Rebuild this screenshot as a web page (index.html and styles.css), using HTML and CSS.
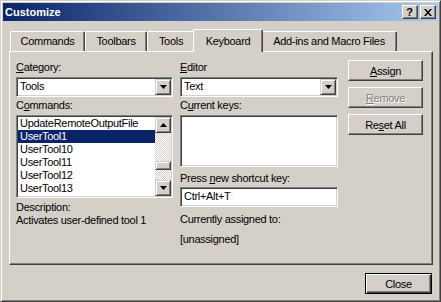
FILE: index.html
```html
<!DOCTYPE html>
<html lang="en">
<head>
    <meta charset="UTF-8">
    <title>Customize</title>
    <link rel="stylesheet" href="styles.css">
</head>
<body>
    <div class="window">
        <div class="titlebar">
            <span class="title">Customize</span>
            <span class="caption-btn help">?</span>
            <span class="caption-btn">
                <svg width="8" height="7" viewBox="0 0 8 7"><path d="M0 0h2l2 2.5L6 0h2L5 3.5 8 7H6L4 4.5 2 7H0l3-3.5z" fill="#000"/></svg>
            </span>
        </div>
        <div class="client">
            <div class="tabs">
                <div class="tab tab-commands">Commands</div>
                <div class="tab tab-toolbars">Toolbars</div>
                <div class="tab tab-tools">Tools</div>
                <div class="tab tab-keyboard selected">Keyboard</div>
                <div class="tab tab-addins">Add-ins and Macro Files</div>
            </div>
            <div class="panel">
                <div class="col col-left">
                    <div class="label"><u>C</u>ategory:</div>
                    <div class="combo">
                        <span class="field-text">Tools</span>
                        <span class="drop-btn"><svg width="7" height="4" viewBox="0 0 7 4"><path d="M0 0h7L3.5 4z" fill="#000"/></svg></span>
                    </div>
                    <div class="label after-field">C<u>o</u>mmands:</div>
                    <div class="listbox">
                        <ul class="items">
                            <li>UpdateRemoteOutputFile</li>
                            <li class="active">UserTool1</li>
                            <li>UserTool10</li>
                            <li>UserTool11</li>
                            <li>UserTool12</li>
                            <li>UserTool13</li>
                        </ul>
                        <div class="scrollbar">
                            <span class="scroll-btn"><svg width="7" height="4" viewBox="0 0 7 4"><path d="M0 4h7L3.5 0z" fill="#000"/></svg></span>
                            <div class="track"><span class="thumb"></span></div>
                            <span class="scroll-btn"><svg width="7" height="4" viewBox="0 0 7 4"><path d="M0 0h7L3.5 4z" fill="#000"/></svg></span>
                        </div>
                    </div>
                    <div class="label desc-label">Description:</div>
                    <div class="label">Activates user-defined tool 1</div>
                </div>
                <div class="col col-mid">
                    <div class="label"><u>E</u>ditor</div>
                    <div class="combo">
                        <span class="field-text">Text</span>
                        <span class="drop-btn"><svg width="7" height="4" viewBox="0 0 7 4"><path d="M0 0h7L3.5 4z" fill="#000"/></svg></span>
                    </div>
                    <div class="label after-field">C<u>u</u>rrent keys:</div>
                    <div class="keys-box"></div>
                    <div class="label press-label">Press <u>n</u>ew shortcut key:</div>
                    <div class="input"><span class="field-text">Ctrl+Alt+T</span></div>
                    <div class="label assigned-label">Currently assigned to:</div>
                    <div class="label unassigned">[unassigned]</div>
                </div>
                <div class="col col-right">
                    <button class="btn" type="button"><u>A</u>ssign</button>
                    <button class="btn disabled" type="button"><u>R</u>emove</button>
                    <button class="btn" type="button">Re<u>s</u>et All</button>
                </div>
            </div>
            <div class="footer">
                <button class="btn btn-default" type="button">Close</button>
            </div>
        </div>
    </div>
</body>
</html>
```

FILE: styles.css
```css
* {
    box-sizing: border-box;
}
body {
    margin: 0;
    background: #d4d0c8;
    font-family: "Liberation Sans", Arial, sans-serif;
    font-size: 11px;
    letter-spacing: -0.3px;
    color: #000;
}
u {
    text-underline-offset: 1px;
}
.window {
    width: 441px;
    height: 302px;
    padding: 2px;
    display: flex;
    flex-direction: column;
    background: #d4d0c8;
    border: 1px solid;
    border-color: #d4d0c8 #404040 #404040 #d4d0c8;
    box-shadow: inset 1px 1px #fff, inset -1px -1px #808080;
}

/* title bar */
.titlebar {
    height: 18px;
    padding: 0 2px;
    display: flex;
    align-items: center;
    background: linear-gradient(to right, #0a246a, #a6caf0);
}
.title {
    flex: 1;
    color: #fff;
    font-weight: bold;
    line-height: 14px;
    letter-spacing: 0;
}
.caption-btn {
    width: 16px;
    height: 14px;
    margin-left: 2px;
    display: flex;
    align-items: center;
    justify-content: center;
    background: #d4d0c8;
    border: 1px solid;
    border-color: #fff #404040 #404040 #fff;
    box-shadow: inset -1px -1px #808080;
    font-weight: bold;
    font-size: 11px;
    line-height: 11px;
}
.caption-btn.help {
    padding-right: 1px;
}

/* tabs */
.client {
    flex: 1;
    display: flex;
    flex-direction: column;
}
.tabs {
    height: 22px;
    margin: 8px 0 0 7px;
    display: flex;
    align-items: flex-end;
}
.tab {
    height: 20px;
    padding-top: 3px;
    text-align: center;
    line-height: 13px;
    background: #d4d0c8;
    border: 1px solid;
    border-bottom: none;
    border-color: #fff #404040 #404040 #fff;
    border-radius: 2px 2px 0 0;
    box-shadow: inset -1px 0 #808080;
}
.tab-commands { width: 75px; }
.tab-toolbars { width: 62px; }
.tab-tools { width: 48px; }
.tab-keyboard { width: 66px; }
.tab-addins { width: 136px; }
.tab.selected {
    position: relative;
    z-index: 1;
    width: 70px;
    height: 23px;
    padding-top: 5px;
    margin: 0 -2px -1px -2px;
}

/* tab page */
.panel {
    width: 424px;
    height: 214px;
    margin-left: 6px;
    display: flex;
    border: 1px solid;
    border-color: #fff #404040 #404040 #fff;
    box-shadow: inset -1px -1px #808080;
}
.col {
    display: flex;
    flex-direction: column;
}
.col-left {
    width: 157px;
    margin-left: 6px;
    padding-top: 9px;
}
.col-mid {
    width: 158px;
    margin-left: 7px;
    padding-top: 9px;
}
.col-right {
    width: 75px;
    margin-left: 10px;
    padding-top: 8px;
    gap: 6px;
}
.label {
    height: 13px;
    line-height: 13px;
    white-space: nowrap;
}
.label + .combo,
.label + .listbox,
.label + .keys-box {
    margin-top: 3px;
}
.after-field {
    margin-top: 2px;
}
.desc-label {
    margin-top: 3px;
}
.press-label {
    margin-top: 5px;
}
.label + .input {
    margin-top: 2px;
}
.assigned-label {
    margin-top: 6px;
}
.unassigned {
    margin-top: 7px;
}

/* sunken fields */
.combo,
.listbox,
.keys-box,
.input {
    padding: 1px;
    background: #fff;
    border: 1px solid;
    border-color: #808080 #fff #fff #808080;
    box-shadow: inset 1px 1px #404040, inset -1px -1px #d4d0c8;
}
.combo,
.input {
    height: 20px;
    display: flex;
}
.field-text {
    flex: 1;
    padding-left: 2px;
    line-height: 14px;
}
.drop-btn,
.scroll-btn,
.thumb {
    background: #d4d0c8;
    border: 1px solid;
    border-color: #d4d0c8 #404040 #404040 #d4d0c8;
    box-shadow: inset 1px 1px #fff, inset -1px -1px #808080;
}
.drop-btn,
.scroll-btn {
    width: 16px;
    height: 16px;
    display: flex;
    align-items: center;
    justify-content: center;
}
.drop-btn svg,
.scroll-btn svg {
    display: block;
}
.listbox {
    height: 83px;
    display: flex;
}
.items {
    flex: 1;
    margin: 0;
    padding: 0;
    list-style: none;
    overflow: hidden;
}
.items li {
    height: 13px;
    line-height: 13px;
    padding-left: 2px;
    white-space: nowrap;
}
.items li.active {
    background: #0a246a;
    color: #fff;
}
.scrollbar {
    width: 16px;
    display: flex;
    flex-direction: column;
}
.track {
    flex: 1;
    display: flex;
    flex-direction: column;
    background-color: #d4d0c8;
    background-image: conic-gradient(#fff 25%, #d4d0c8 0 50%, #fff 0 75%, #d4d0c8 0);
    background-size: 2px 2px;
}
.thumb {
    height: 9px;
    margin-top: 28px;
}
.keys-box {
    height: 52px;
}

/* push buttons */
.btn {
    width: 75px;
    height: 21px;
    padding: 0;
    font: inherit;
    letter-spacing: inherit;
    color: #000;
    background: #d4d0c8;
    border: 1px solid;
    border-color: #fff #404040 #404040 #fff;
    box-shadow: inset -1px -1px #808080;
}
.btn.disabled {
    color: #808080;
    text-shadow: 1px 1px #fff;
}
.footer {
    display: flex;
    justify-content: flex-end;
    padding: 8px 6px 0 0;
}
.btn-default {
    width: 67px;
    border-color: #000;
    box-shadow: inset 1px 1px #fff, inset -1px -1px #404040, inset -2px -2px #808080;
}
```
